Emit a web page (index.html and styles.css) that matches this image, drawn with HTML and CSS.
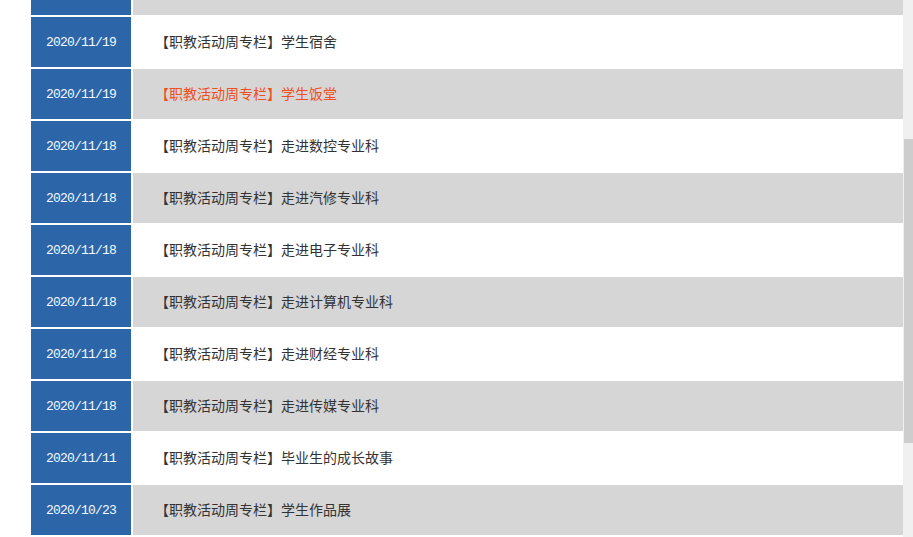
FILE: index.html
```html
<!DOCTYPE html>
<html lang="zh-CN">
<head>
<meta charset="utf-8">
<title>职教活动周专栏</title>
<link rel="stylesheet" href="styles.css">
</head>
<body>
<div class="page">
  <div class="viewport">
    <ul class="list">
      <li class="row alt"><span class="date"></span><a class="title"></a></li>
      <li class="row"><span class="date">2020/11/19</span><a class="title">【职教活动周专栏】学生宿舍</a></li>
      <li class="row alt"><span class="date">2020/11/19</span><a class="title hot">【职教活动周专栏】学生饭堂</a></li>
      <li class="row"><span class="date">2020/11/18</span><a class="title">【职教活动周专栏】走进数控专业科</a></li>
      <li class="row alt"><span class="date">2020/11/18</span><a class="title">【职教活动周专栏】走进汽修专业科</a></li>
      <li class="row"><span class="date">2020/11/18</span><a class="title">【职教活动周专栏】走进电子专业科</a></li>
      <li class="row alt"><span class="date">2020/11/18</span><a class="title">【职教活动周专栏】走进计算机专业科</a></li>
      <li class="row"><span class="date">2020/11/18</span><a class="title">【职教活动周专栏】走进财经专业科</a></li>
      <li class="row alt"><span class="date">2020/11/18</span><a class="title">【职教活动周专栏】走进传媒专业科</a></li>
      <li class="row"><span class="date">2020/11/11</span><a class="title">【职教活动周专栏】毕业生的成长故事</a></li>
      <li class="row alt"><span class="date">2020/10/23</span><a class="title">【职教活动周专栏】学生作品展</a></li>
    </ul>
  </div>
  <div class="scrollbar"><div class="thumb"></div></div>
</div>
</body>
</html>
```
FILE: styles.css
```css
html, body {
  margin: 0;
  padding: 0;
  background: #fff;
  overflow: hidden;
}
.page {
  display: flex;
  width: 913px;
  height: 537px;
}
.viewport {
  width: 903px;
  height: 537px;
  overflow: hidden;
}
.list {
  list-style: none;
  margin: -35px 0 0 31px;
  padding: 0;
  display: flex;
  flex-direction: column;
  gap: 2px;
}
.row {
  display: flex;
  height: 50px;
  gap: 2px;
  background: #fff;
}
.date {
  flex: 0 0 100px;
  background: #2c66a9;
  color: #f4f8ff;
  display: flex;
  align-items: center;
  justify-content: center;
  padding-top: 1px;
  box-sizing: border-box;
  font-family: "Liberation Mono", monospace;
  font-size: 13px;
  letter-spacing: -0.8px;
}
.title {
  flex: 1;
  display: flex;
  align-items: center;
  padding-left: 22px;
  padding-bottom: 3px;
  font-family: "Noto Sans CJK SC", sans-serif;
  font-size: 14px;
  color: #333;
  background: #fff;
}
.row.alt .title {
  background: #d6d6d6;
}
.title.hot {
  color: #f0501e;
}
.scrollbar {
  width: 10px;
  height: 537px;
  background: #f0f0f0;
  display: flex;
  flex-direction: column;
  align-items: flex-end;
}
.thumb {
  margin-top: 139px;
  width: 9px;
  height: 304px;
  background: #cdcdcd;
}
```
